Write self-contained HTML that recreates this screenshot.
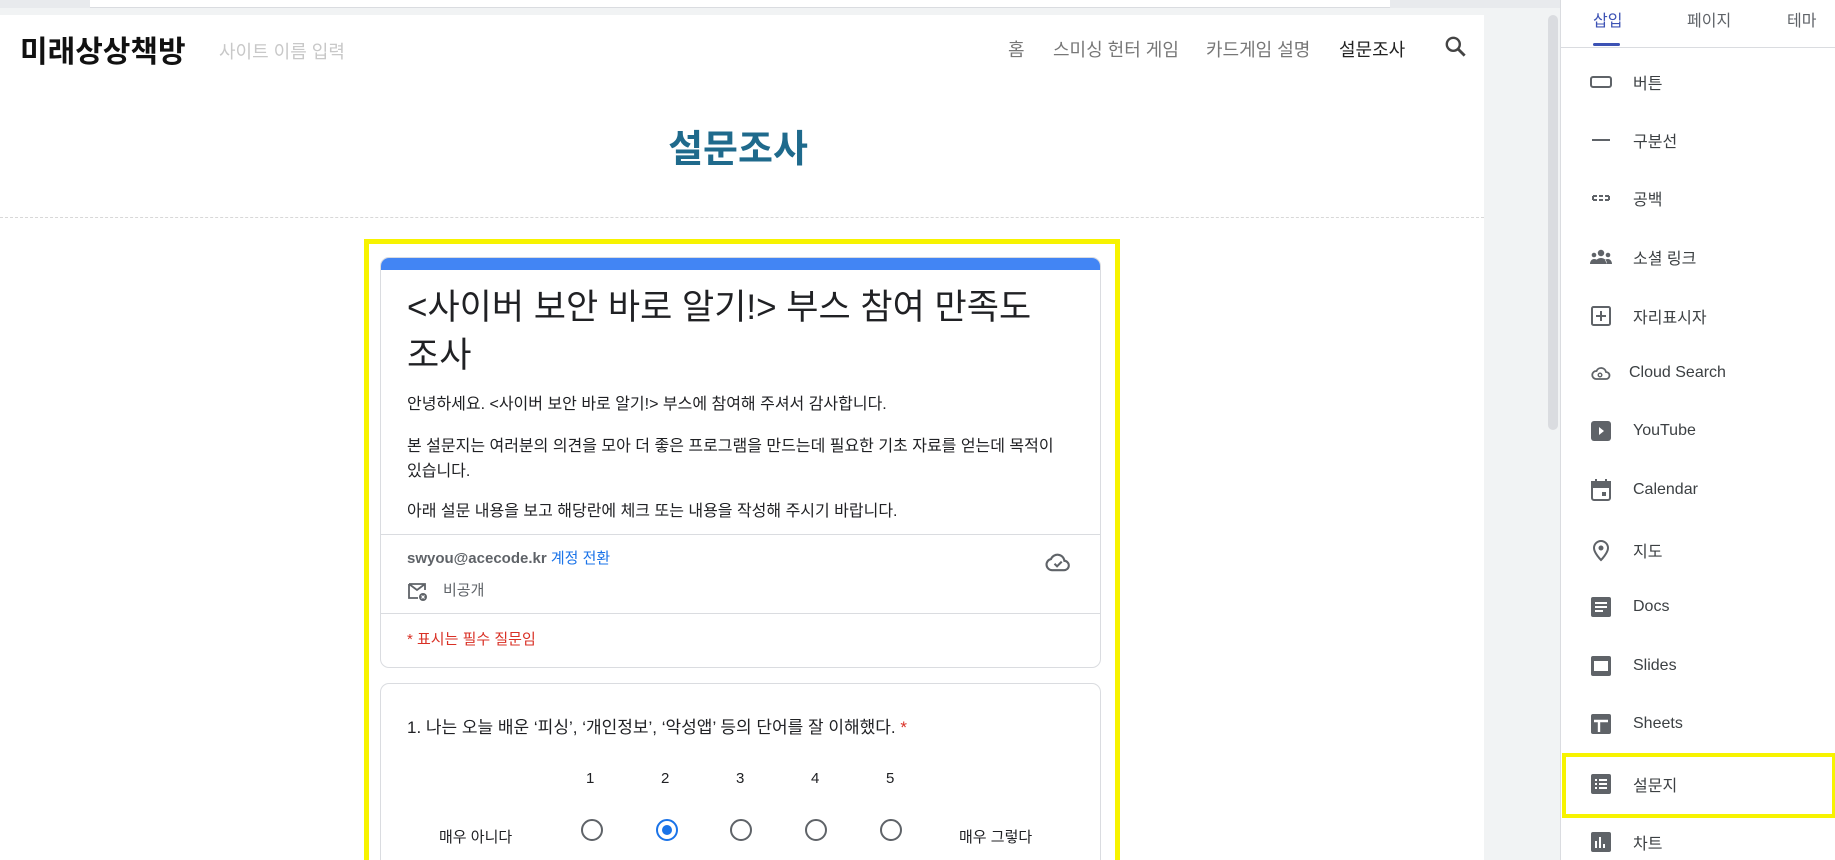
<!DOCTYPE html>
<html style="width:1835px;height:860px;overflow:hidden"><head><meta charset="utf-8"><style>
*{margin:0;padding:0;box-sizing:border-box}
body{width:1835px;height:860px;overflow:hidden;background:#f1f3f4;font-family:"Liberation Sans","Noto Sans CJK KR",sans-serif;position:relative}
.a{position:absolute;white-space:nowrap}
.page{position:absolute;left:0;top:15px;width:1484px;height:845px;background:#fff}
.nav{font-size:18px;color:#777;top:36px}
.side{position:absolute;left:1560px;top:0;width:275px;height:860px;background:#fff;border-left:1px solid #dadce0}
.it{position:absolute;left:72px;font-size:16px;color:#3c4043;transform:translateY(-50%)}
.ic{position:absolute;left:28px;width:24px;height:24px;transform:translateY(-50%)}
.card{position:absolute;background:#fff;border:1px solid #dadce0;border-radius:9px;overflow:hidden}
.p{font-size:16px;color:#202124}
.radio{position:absolute;width:22px;height:22px;border:2px solid #5f6368;border-radius:50%;top:819px}
</style></head><body>
<div class="a" style="left:0;top:0;width:1835px;height:8px;background:#e8eaed"></div>
<div class="a" style="left:90px;top:0;width:1300px;height:8px;background:#fff;border-bottom:1px solid #dadce0"></div>
<div class="page"></div>
<div class="a" style="left:1548px;top:15px;width:10px;height:415px;background:#dadce0;border-radius:5px"></div>

<div class="a" style="left:20px;top:27px;font-size:30px;font-weight:bold;color:#111">미래상상책방</div>
<div class="a" style="left:219px;top:38px;font-size:18px;color:#c8c8c8">사이트 이름 입력</div>
<div class="a nav" style="left:1008px">홈</div>
<div class="a nav" style="left:1053px">스미싱 헌터 게임</div>
<div class="a nav" style="left:1206px">카드게임 설명</div>
<div class="a nav" style="left:1339px;color:#222">설문조사</div>
<svg class="a" style="left:1443px;top:34px" width="26" height="26" viewBox="0 0 24 24"><circle cx="9.5" cy="9.5" r="6" fill="none" stroke="#444" stroke-width="2.2"/><path d="M14 14l6 6" stroke="#444" stroke-width="2.6"/></svg>
<div class="a" style="left:0;width:1476px;top:118px;text-align:center;font-size:38px;font-weight:bold;color:#1f6a8c">설문조사</div>
<div class="a" style="left:0;top:217px;width:1484px;border-top:1px dashed #d8d8d8"></div>

<div class="a" style="left:364px;top:239px;width:756px;height:630px;border:5px solid #f7f300"></div>

<div class="card" style="left:380px;top:257px;width:721px;height:411px">
<div style="height:12px;background:#4285f4"></div>
</div>
<div class="a" style="left:407px;top:284px;font-size:35px;color:#202124;line-height:48px">&lt;사이버 보안 바로 알기!&gt; 부스 참여 만족도<br>조사</div>
<div class="a p" style="left:407px;top:390px">안녕하세요. &lt;사이버 보안 바로 알기!&gt; 부스에 참여해 주셔서 감사합니다.</div>
<div class="a p" style="left:407px;top:434px;line-height:25px">본 설문지는 여러분의 의견을 모아 더 좋은 프로그램을 만드는데 필요한 기초 자료를 얻는데 목적이<br>있습니다.</div>
<div class="a p" style="left:407px;top:497px">아래 설문 내용을 보고 해당란에 체크 또는 내용을 작성해 주시기 바랍니다.</div>
<div class="a" style="left:381px;top:534px;width:719px;border-top:1px solid #dadce0"></div>
<div class="a" style="left:407px;top:547px;font-size:15px;font-weight:bold;color:#5f6368">swyou@acecode.kr <span style="font-weight:normal;color:#1a73e8">계정 전환</span></div>
<svg class="a" style="left:406px;top:579px" width="24" height="24" viewBox="0 0 24 24"><path d="M3 5h16v6M3 5v14h9M3 5l8 6 8-6" fill="none" stroke="#5f6368" stroke-width="1.8"/><circle cx="17" cy="18" r="4" fill="#5f6368"/><path d="M15.5 16.5l3 3M18.5 16.5l-3 3" stroke="#fff" stroke-width="1.2"/></svg>
<div class="a" style="left:443px;top:579px;font-size:15px;color:#5f6368">비공개</div>
<svg class="a" style="left:1044px;top:548px" width="28" height="28" viewBox="0 0 24 24"><path d="M7 19h10a4 4 0 0 0 .5-8A6 6 0 0 0 6 9.5 4.8 4.8 0 0 0 7 19z" fill="none" stroke="#5f6368" stroke-width="1.8"/><path d="M9 13.5l2.2 2.2 4-4" fill="none" stroke="#5f6368" stroke-width="1.8"/></svg>
<div class="a" style="left:381px;top:613px;width:719px;border-top:1px solid #dadce0"></div>
<div class="a" style="left:407px;top:628px;font-size:15px;color:#d93025">* 표시는 필수 질문임</div>

<div class="card" style="left:380px;top:683px;width:721px;height:200px"></div>
<div class="a" style="left:407px;top:713px;font-size:17px;color:#202124">1. 나는 오늘 배운 ‘피싱’, ‘개인정보’, ‘악성앱’ 등의 단어를 잘 이해했다. <span style="color:#d93025">*</span></div>
<div class="a" style="left:586px;top:770px;font-size:15px;color:#202124">1</div>
<div class="a" style="left:661px;top:770px;font-size:15px;color:#202124">2</div>
<div class="a" style="left:736px;top:770px;font-size:15px;color:#202124">3</div>
<div class="a" style="left:811px;top:770px;font-size:15px;color:#202124">4</div>
<div class="a" style="left:886px;top:770px;font-size:15px;color:#202124">5</div>
<div class="a" style="left:439px;top:826px;font-size:15px;color:#202124">매우 아니다</div>
<div class="a" style="left:959px;top:826px;font-size:15px;color:#202124">매우 그렇다</div>
<div class="radio" style="left:581px"></div>
<div class="radio" style="left:656px;border-color:#1a73e8"><div style="position:absolute;left:4px;top:4px;width:10px;height:10px;border-radius:50%;background:#1a73e8"></div></div>
<div class="radio" style="left:730px"></div>
<div class="radio" style="left:805px"></div>
<div class="radio" style="left:880px"></div>

<div class="side">
<div class="a" style="left:32px;top:7px;font-size:16px;color:#3c52b4">삽입</div>
<div class="a" style="left:32px;top:43px;width:27px;height:3px;background:#3c52b4;border-radius:2px"></div>
<div class="a" style="left:126px;top:7px;font-size:16px;color:#5f6368">페이지</div>
<div class="a" style="left:226px;top:7px;font-size:16px;color:#5f6368">테마</div>
<div class="a" style="left:0;top:47px;width:275px;border-top:1px solid #dadce0"></div>

<svg class="ic" style="top:82px" viewBox="0 0 24 24"><rect x="2" y="7" width="20" height="10" rx="2" fill="none" stroke="#5f6368" stroke-width="2"/></svg><div class="it" style="top:82px">버튼</div>
<svg class="ic" style="top:140px" viewBox="0 0 24 24"><path d="M3 12h18" stroke="#5f6368" stroke-width="2"/></svg><div class="it" style="top:140px">구분선</div>
<svg class="ic" style="top:198px" viewBox="0 0 24 24"><path d="M4 10h4M4 14h4M4 10v4M10 10h4M10 14h4M16 10h4M16 14h4M20 10v4" stroke="#5f6368" stroke-width="2"/></svg><div class="it" style="top:198px">공백</div>
<svg class="ic" style="top:257px" viewBox="0 0 24 24"><circle cx="12" cy="8" r="3.2" fill="#5f6368"/><circle cx="5" cy="10" r="2.3" fill="#5f6368"/><circle cx="19" cy="10" r="2.3" fill="#5f6368"/><path d="M6 19c0-4 3-6 6-6s6 2 6 6zM1 19c0-3 2-5 4-5s3 1 3 1l-2 4zM23 19c0-3-2-5-4-5s-3 1-3 1l2 4z" fill="#5f6368"/></svg><div class="it" style="top:257px">소셜 링크</div>
<svg class="ic" style="top:316px" viewBox="0 0 24 24"><rect x="3" y="3" width="18" height="18" rx="1.5" fill="none" stroke="#5f6368" stroke-width="2"/><path d="M12 7v10M7 12h10" stroke="#5f6368" stroke-width="2"/></svg><div class="it" style="top:316px">자리표시자</div>
<svg class="ic" style="top:373px" viewBox="0 0 24 24"><path d="M7 18h10a3.5 3.5 0 0 0 0-7 5 5 0 0 0-9.5-1A4 4 0 0 0 7 18z" fill="none" stroke="#5f6368" stroke-width="1.8"/><circle cx="11" cy="14" r="1.8" fill="none" stroke="#5f6368" stroke-width="1.4"/></svg><div class="it" style="top:373px;left:68px">Cloud Search</div>
<svg class="ic" style="top:431px" viewBox="0 0 24 24"><rect x="2" y="2" width="20" height="20" rx="3" fill="#5f6368"/><path d="M10 8l5 4-5 4z" fill="#fff"/></svg><div class="it" style="top:431px">YouTube</div>
<svg class="ic" style="top:490px" viewBox="0 0 24 24"><rect x="3" y="4" width="18" height="18" rx="2" fill="none" stroke="#5f6368" stroke-width="2"/><path d="M3 4h18v5H3zM7 1v4M17 1v4" fill="#5f6368" stroke="#5f6368" stroke-width="2"/><rect x="13" y="14" width="4" height="4" fill="#5f6368"/></svg><div class="it" style="top:490px">Calendar</div>
<svg class="ic" style="top:550px" viewBox="0 0 24 24"><path d="M12 22s-7-7-7-12a7 7 0 0 1 14 0c0 5-7 12-7 12z" fill="none" stroke="#5f6368" stroke-width="2"/><circle cx="12" cy="10" r="2.5" fill="#5f6368"/></svg><div class="it" style="top:550px">지도</div>
<svg class="ic" style="top:607px" viewBox="0 0 24 24"><rect x="2" y="2" width="20" height="20" rx="2" fill="#5f6368"/><path d="M6 8h12M6 12h12M6 16h8" stroke="#fff" stroke-width="2"/></svg><div class="it" style="top:607px">Docs</div>
<svg class="ic" style="top:666px" viewBox="0 0 24 24"><rect x="2" y="2" width="20" height="20" rx="2" fill="#5f6368"/><rect x="5" y="7" width="14" height="10" fill="#fff"/></svg><div class="it" style="top:666px">Slides</div>
<svg class="ic" style="top:724px" viewBox="0 0 24 24"><rect x="2" y="2" width="20" height="20" rx="2" fill="#5f6368"/><path d="M5 9h14M10 9v11" stroke="#fff" stroke-width="2.4"/></svg><div class="it" style="top:724px">Sheets</div>
<div class="a" style="left:1px;top:753px;width:274px;height:65px;border:4px solid #f7f300"></div>
<svg class="ic" style="top:784px" viewBox="0 0 24 24"><rect x="2" y="2" width="20" height="20" rx="2" fill="#5f6368"/><path d="M6 8h2M10 8h8M6 12h2M10 12h8M6 16h2M10 16h8" stroke="#fff" stroke-width="2"/></svg><div class="it" style="top:784px">설문지</div>
<svg class="ic" style="top:842px" viewBox="0 0 24 24"><rect x="2" y="2" width="20" height="20" rx="2" fill="#5f6368"/><path d="M7 18v-7M11 18V7M15 18v-4" stroke="#fff" stroke-width="2"/></svg><div class="it" style="top:842px">차트</div>
</div>
</body></html>
